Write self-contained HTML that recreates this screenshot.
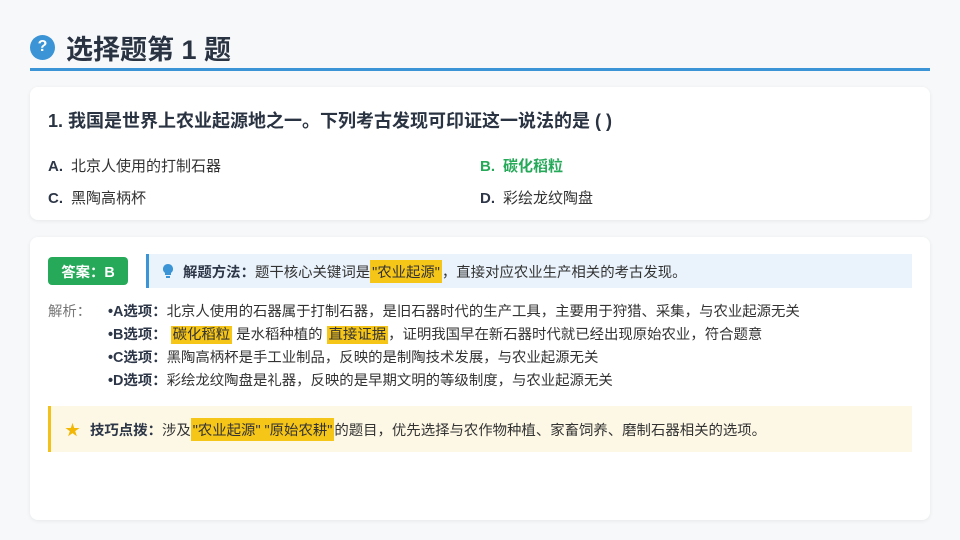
<!DOCTYPE html>
<html><head><meta charset="utf-8"><style>
*{margin:0;padding:0;box-sizing:border-box}
body{width:960px;height:540px;background:#f6f8fa;font-family:"Liberation Sans","Noto Sans CJK SC",sans-serif;color:#2d3748;position:relative;overflow:hidden}
.abs{position:absolute}
.title{left:30px;top:30px;height:34px;display:flex;align-items:center;font-size:27px;font-weight:bold;color:#2a3342}
.q{width:25px;height:25px;border-radius:50%;background:#3a94d6;color:#fff;font-size:16px;display:flex;align-items:center;justify-content:center;margin-right:11px}
.line{left:30px;top:68px;width:900px;height:3px;background:#3a94d6}
.card{background:#fff;border-radius:8px;box-shadow:0 1px 4px rgba(0,0,0,.07)}
.opt{font-size:15px;color:#333;white-space:nowrap}
.opt b{font-weight:bold;margin-right:8px;color:#2d3748}
.hl{background:#f5c518;padding:1px 2px}
.ana{font-size:14.4px;color:#333;white-space:nowrap;left:108px}
.ana b{color:#2d3748}
</style></head><body>
<div class="abs title"><div class="q">?</div>选择题第 1 题</div>
<div class="abs line"></div>
<div class="abs card" style="left:30px;top:87px;width:900px;height:133px"></div>
<div class="abs" style="left:48px;top:107px;font-size:18px;font-weight:bold;color:#2a3342;white-space:nowrap">1. 我国是世界上农业起源地之一。下列考古发现可印证这一说法的是 ( )</div>
<div class="abs opt" style="left:48px;top:155px"><b>A.</b>北京人使用的打制石器</div>
<div class="abs opt" style="left:480px;top:155px;color:#27a95a;font-weight:bold"><b style="color:#27a95a">B.</b>碳化稻粒</div>
<div class="abs opt" style="left:48px;top:187px"><b>C.</b>黑陶高柄杯</div>
<div class="abs opt" style="left:480px;top:187px"><b>D.</b>彩绘龙纹陶盘</div>

<div class="abs card" style="left:30px;top:237px;width:900px;height:283px"></div>
<div class="abs" style="left:48px;top:257px;width:80px;height:28px;background:#27a95a;border-radius:4px;color:#fff;font-weight:bold;font-size:14.4px;display:flex;align-items:center;justify-content:center">答案：B</div>
<div class="abs" style="left:146px;top:254px;width:766px;height:34px;background:#eaf3fb;border-left:3px solid #3a94d6;font-size:14.4px;color:#333;display:flex;align-items:center;padding-left:14px;white-space:nowrap">
<svg width="10" height="14" viewBox="0 0 10 14" style="margin-right:10px"><path d="M5 0a5 5 0 0 0-3 9v2h6V9a5 5 0 0 0-3-9z" fill="#3a94d6"/><rect x="3" y="12" width="4" height="2" fill="#3a94d6"/></svg>
<b style="color:#2d3748">解题方法：</b>题干核心关键词是<span class="hl">"农业起源"</span>，直接对应农业生产相关的考古发现。</div>
<div class="abs" style="left:48px;top:300px;font-size:14.4px;color:#777">解析：</div>
<div class="abs ana" style="top:300px"><b>•A选项：</b>北京人使用的石器属于打制石器，是旧石器时代的生产工具，主要用于狩猎、采集，与农业起源无关</div>
<div class="abs ana" style="top:323px"><b>•B选项：</b> <span class="hl">碳化稻粒</span> 是水稻种植的 <span class="hl">直接证据</span>，证明我国早在新石器时代就已经出现原始农业，符合题意</div>
<div class="abs ana" style="top:346px"><b>•C选项：</b>黑陶高柄杯是手工业制品，反映的是制陶技术发展，与农业起源无关</div>
<div class="abs ana" style="top:369px"><b>•D选项：</b>彩绘龙纹陶盘是礼器，反映的是早期文明的等级制度，与农业起源无关</div>
<div class="abs" style="left:48px;top:406px;width:864px;height:46px;background:#fdf8e6;border-left:3px solid #f2c21b;font-size:14.4px;color:#333;display:flex;align-items:center;padding-left:14px;white-space:nowrap">
<span style="color:#f2b705;font-size:15px;margin-right:10px">★</span><b style="color:#2d3748">技巧点拨：</b>涉及<span class="hl">"农业起源" "原始农耕"</span>的题目，优先选择与农作物种植、家畜饲养、磨制石器相关的选项。</div>
</body></html>
